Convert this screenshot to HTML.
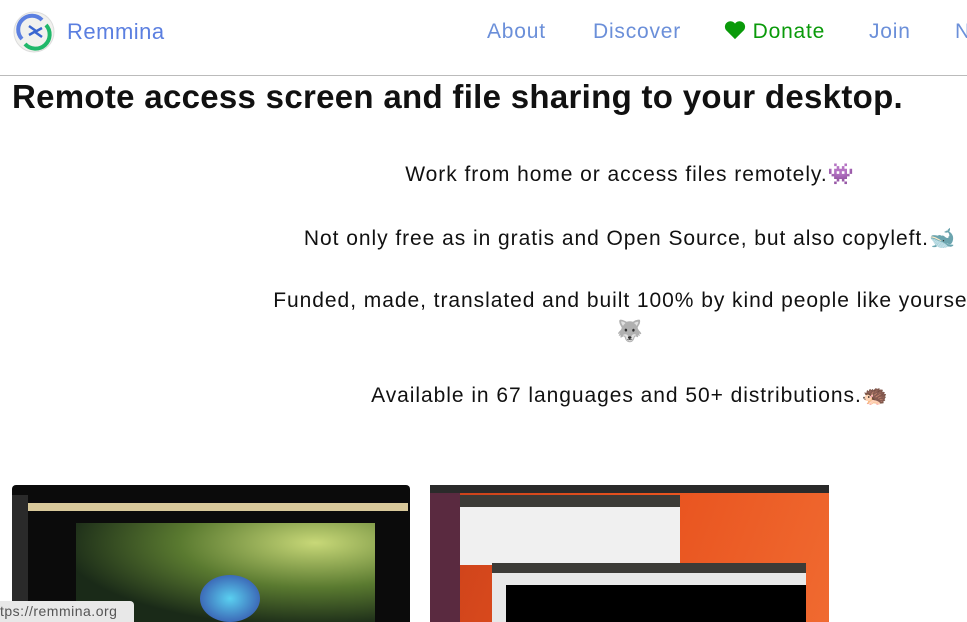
<!DOCTYPE html>
<html><head><style>
html,body{margin:0;width:967px;height:622px;overflow:hidden}
body{background:#fff;font-family:"Liberation Sans",sans-serif;position:relative}
.a{position:absolute}
.nav{font-size:21px;color:#6b8fd9;top:20px;letter-spacing:0.8px}
.p{position:absolute;left:0;width:1260px;text-align:center;font-size:21px;color:#111;letter-spacing:0.95px}
</style></head><body>
<svg class="a" style="left:13px;top:11px" width="42" height="42" viewBox="0 0 42 42">
<circle cx="21" cy="21" r="20" fill="#f1f1ee" stroke="#ddd"/>
<path d="M9 28 A13 13 0 0 1 29 9" stroke="#5b7fe0" stroke-width="4" fill="none"/>
<path d="M33 14 A13 13 0 0 1 12 33" stroke="#1fb86a" stroke-width="4" fill="none"/>
<path d="M16 15 L23 20 L16 24 M29 17 L22 21 L29 26" stroke="#3a66d0" stroke-width="2.5" fill="none"/>
</svg>
<div class="a" style="left:67px;top:19px;font-size:22px;color:#5b7fe0;letter-spacing:0.5px">Remmina</div>
<div class="a nav" style="left:487px">About</div>
<div class="a nav" style="left:593px">Discover</div>
<div class="a nav" style="left:724px;color:#0a9a0a"><svg width="22" height="20" viewBox="0 0 24 22" style="vertical-align:-2px"><path d="M12 21 L2 11 A5.5 5.5 0 0 1 12 4 A5.5 5.5 0 0 1 22 11 Z" fill="#0a9a0a"/></svg> Donate</div>
<div class="a nav" style="left:869px">Join</div>
<div class="a nav" style="left:955px">N</div>
<div class="a" style="left:0;top:75px;width:967px;height:1px;background:#bbb"></div>
<div class="a" style="left:12px;top:78px;font-size:33px;font-weight:bold;color:#111;letter-spacing:0.3px;white-space:nowrap">Remote access screen and file sharing to your desktop.</div>
<div class="p" style="top:163px">Work from home or access files remotely.<span style="color:#a020c0">👾</span></div>
<div class="p" style="top:227px">Not only free as in gratis and Open Source, but also copyleft.<span style="color:#3a7abf">🐋</span></div>
<div class="p" style="top:289px">Funded, made, translated and built 100% by kind people like yourself.</div>
<div class="p" style="top:320px">🐺</div>
<div class="p" style="top:384px">Available in 67 languages and 50+ distributions.🦔</div>
<div class="a" style="left:12px;top:485px;width:398px;height:137px;background:#0b0b0b;border-radius:4px 4px 0 0"></div>
<div class="a" style="left:28px;top:503px;width:380px;height:8px;background:#d8c89a"></div>
<div class="a" style="left:12px;top:495px;width:16px;height:127px;background:#2a2a2a"></div>
<div class="a" style="left:76px;top:523px;width:299px;height:99px;background:radial-gradient(ellipse at 80% 20%,#c8d878,#5a7a30 40%,#1a2a18 75%)"></div>
<div class="a" style="left:200px;top:575px;width:60px;height:47px;border-radius:50%;background:radial-gradient(#5ad0f0,#3040a0)"></div>
<div class="a" style="left:430px;top:485px;width:399px;height:137px;background:linear-gradient(110deg,#c8401a,#e8521e 50%,#f06a30)"></div>
<div class="a" style="left:430px;top:485px;width:399px;height:8px;background:#2a2a2a"></div>
<div class="a" style="left:430px;top:493px;width:30px;height:129px;background:#5a2a40"></div>
<div class="a" style="left:460px;top:495px;width:220px;height:58px;background:#f0f0f0;border-top:12px solid #3c3b37"></div>
<div class="a" style="left:492px;top:563px;width:314px;height:49px;background:#e8e8e8;border-top:10px solid #3c3b37"></div>
<div class="a" style="left:506px;top:585px;width:300px;height:37px;background:#000"></div>
<div class="a" style="left:0;top:601px;width:134px;height:21px;background:#e8e8e8;border-radius:0 4px 0 0;font-size:14px;color:#555;line-height:21px;letter-spacing:0.5px">tps://remmina.org</div>
</body></html>
